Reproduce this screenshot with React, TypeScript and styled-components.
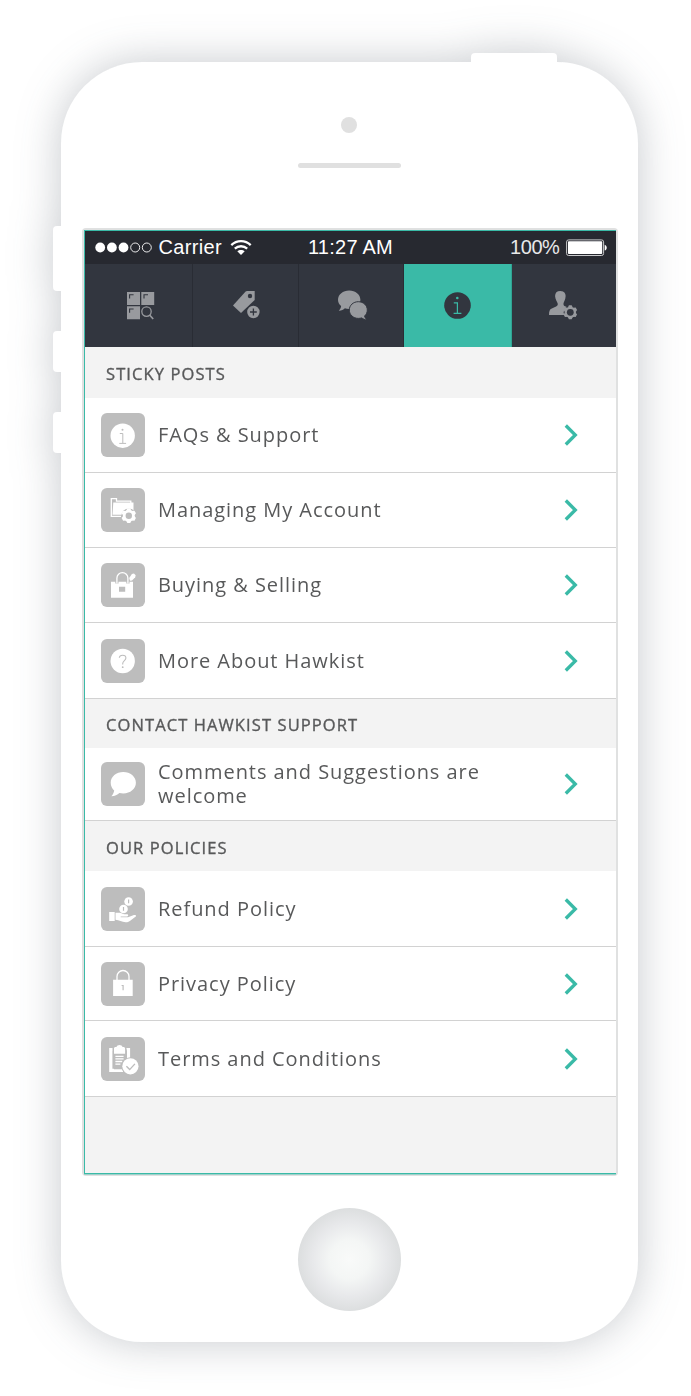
import React from "react";
import styled, { createGlobalStyle } from "styled-components";

const GlobalStyle = createGlobalStyle`
  * { box-sizing: border-box; }
  body { margin: 0; background: #fff; overflow: hidden; }
`;

const TEAL = "#3abaa7";
const TILE = "#bdbdbd";
const DARK = "#32363f";
const MUTED = "#989a9e";

const Stage = styled.main`
  height: 1396px;
  width: 691px;
  padding: 62px 0 0 61px;
  overflow: hidden;
`;

const Phone = styled.div`
  position: relative;
  width: 577px;
  height: 1280px;
  padding-top: 55px;
  display: flex;
  flex-direction: column;
  align-items: center;
  border-radius: 81px;
  background: #fff;
  filter: drop-shadow(0 0 22px rgba(50, 60, 76, 0.28));
`;

const SideButton = styled.span<{ $top: number; $height: number }>`
  position: absolute;
  left: -8px;
  top: ${(p) => p.$top}px;
  width: 9px;
  height: ${(p) => p.$height}px;
  border-radius: 4px 0 0 4px;
  background: #fff;
`;

const PowerButton = styled.span`
  position: absolute;
  left: 410px;
  top: -9px;
  width: 86px;
  height: 12px;
  border-radius: 4px 4px 0 0;
  background: #fff;
`;

const Camera = styled.div`
  width: 16px;
  height: 16px;
  margin-right: 1px;
  border-radius: 50%;
  background: #e0e0e0;
  flex: none;
`;

const Speaker = styled.div`
  width: 103px;
  height: 5px;
  margin: 30px 0 60px;
  border-radius: 3px;
  background: #e0e0e0;
  flex: none;
`;

const Bezel = styled.div`
  width: 536px;
  height: 948px;
  padding: 2px;
  border-radius: 4px;
  background: #e0e1e1;
  flex: none;
`;

const Screen = styled.section`
  display: flex;
  flex-direction: column;
  width: 532px;
  height: 944px;
  border: solid ${TEAL};
  border-width: 1px 0 1px 1px;
  box-shadow: 0 1px 0 rgba(58, 186, 167, 0.4);
  background: #f3f3f3;
  font-family: "Open Sans", sans-serif;
  color: #58595a;
`;

const StatusBar = styled.header`
  display: grid;
  grid-template-columns: 1fr auto 1fr;
  align-items: center;
  height: 33px;
  padding: 0 9px 0 10px;
  background: #272930;
  color: #fff;
  font: 20px/33px "Liberation Sans", Arial, sans-serif;
`;

const StatusGroup = styled.div<{ $end?: boolean }>`
  display: flex;
  align-items: center;
  justify-content: ${(p) => (p.$end ? "flex-end" : "flex-start")};
  gap: 6px;
`;

const Carrier = styled.span`
  margin: 0 2px 0 1px;
  letter-spacing: 0.35px;
`;

const Clock = styled.span`
  letter-spacing: 0.25px;
`;

const Percent = styled.span`
  color: #e8e8ea;
  letter-spacing: -0.4px;
`;

const TabBar = styled.nav`
  display: grid;
  grid-template-columns: 108px 106px 105px 108px 104px;
  height: 83px;
  background: ${DARK};
`;

const Tab = styled.button<{ $active?: boolean; $inset: number }>`
  display: flex;
  align-items: center;
  border: 0;
  border-right: 1px solid ${(p) => (p.$active ? "#2fa594" : "#292c34")};
  padding: 0 0 1px ${(p) => p.$inset}px;
  background: ${(p) => (p.$active ? TEAL : "transparent")};
  &:last-child { border-right: 0; }
  svg { overflow: visible; }
`;

const SectionTitle = styled.h2<{ $height: number }>`
  margin: 0;
  height: ${(p) => p.$height}px;
  padding: 2px 0 0 21.5px;
  font-size: 16.5px;
  font-weight: 400;
  line-height: ${(p) => Math.min(p.$height, 50) - 1}px;
  letter-spacing: 1.1px;
  color: #58595a;
  -webkit-text-stroke: 0.35px #58595a;
`;

const List = styled.ul`
  margin: 0;
  padding: 0;
  list-style: none;
`;

const Row = styled.li<{ $height: number }>`
  display: flex;
  align-items: center;
  height: ${(p) => p.$height}px;
  padding: 0 38px 0 16px;
  border-bottom: 1px solid #d2d2d2;
  background: #fff;
`;

const Tile = styled.svg`
  flex: none;
  width: 44px;
  height: 44px;
  border-radius: 6px;
  background: ${TILE};
`;

const Label = styled.span`
  flex: 1;
  padding: 0 60px 0 13.5px;
  font-size: 20px;
  font-weight: 400;
  line-height: 24px;
  letter-spacing: 0.95px;
`;

const Chevron = () => (
  <svg width="14" height="22" viewBox="0 0 14 22" fill="none" stroke={TEAL} strokeWidth="3.3">
    <path d="M1.8 1.500 11.300 11 1.800 20.500" />
  </svg>
);

const HomeButton = styled.div`
  width: 103px;
  height: 103px;
  margin-top: 32px;
  border-radius: 50%;
  background: radial-gradient(circle closest-side, #f9faf9 0, #f4f6f5 38%, #e8e9eb 70%, #dcdedf 100%);
  flex: none;
`;

type GearProps = { cx: number; cy: number; r: number; hole: number; fill: string; bg: string };
const Gear = ({ cx, cy, r, hole, fill, bg }: GearProps) => (
  <g transform={`translate(${cx} ${cy})`}>
    <circle r={r * 0.8} fill={fill} />
    {[0, 60, 120, 180, 240, 300].map((a) => (
      <path key={a} transform={`rotate(${a})`} d={`M${-r * 0.36} ${-r * 0.65}L${-r * 0.2} ${-r}H${r * 0.2}L${r * 0.36} ${-r * 0.65}Z`} fill={fill} />
    ))}
    <circle r={hole} fill={bg} />
  </g>
);

const tabIcons = {
  browse: (
    <svg width="28" height="28" viewBox="0 0 28 28" fill={MUTED}>
      <path d="M0 1h13v13H0zM14.3 1h12.9v13H14.3zM0 15.2h13v13H0z" />
      <path d="M2.6 7.6V3.8h4M17 7.6V3.8h4M2.6 21.8V18h4" fill="none" stroke={DARK} strokeWidth="1.100" />
      <circle cx="19.5" cy="20.6" r="4.7" fill="none" stroke={MUTED} strokeWidth="1.300" />
      <path d="m22.600 24 3.600 4" stroke={MUTED} strokeWidth="1.700" />
    </svg>
  ),
  sell: (
    <svg width="28" height="28" viewBox="0 0 28 28" fill={MUTED}>
      <path d="M0 14.6 12.6.5 14 0h7.700v8.900L8 22z" />
      <circle cx="17" cy="5" r="2.200" fill={DARK} />
      <circle cx="20.400" cy="21" r="7.200" fill={DARK} />
      <circle cx="20.400" cy="21" r="6.200" />
      <path d="M20.400 17.600v6.800M17 21h6.800" stroke={DARK} strokeWidth="1.300" />
    </svg>
  ),
  chat: (
    <svg width="28" height="28" viewBox="0 1 28 28" fill={MUTED}>
      <path d="M11.200.5C17.400.5 22.400 4.500 22.400 9.800s-5 9.200-11.200 9.200c-1.600 0-3-.2-4.300-.7C5.400 19.600 3.400 20.800.8 20.700c1.500-1.600 2.200-3 2.300-4.600C1.100 14.400 0 12.300 0 9.800 0 4.500 5 .5 11.200.5Z" />
      <path d="M20.300 11.700c5 0 9 3.600 9 8.300 0 2.400-1 4.500-2.700 6 .2 1.300 1 2.500 2.300 3.800-2.200 0-3.800-.8-5.100-1.900-1.100.3-2.200.5-3.500.5-5 0-9-3.700-9-8.400s4-8.300 9-8.300Z" stroke={DARK} strokeWidth="1" />
    </svg>
  ),
  info: (
    <svg width="28" height="28" viewBox="0 0 28 28">
      <circle cx="13.500" cy="14.500" r="13.300" fill={DARK} />
      <circle cx="13.300" cy="7" r="1.300" fill={TEAL} />
      <path d="M9.800 11.900h3.600v10.300M9.600 22.300h7.800" fill="none" stroke={TEAL} strokeWidth="1.200" />
    </svg>
  ),
  profile: (
    <svg width="28" height="28" viewBox="0 0 28 28" fill={MUTED}>
      <path d="M11.300 0c3.600 0 5.500 2.100 5.300 5.300-.1 3.300-1.500 5.300-2 6.700-.4 1.500.2 2.600 1.500 3.200l4 1.800V24H0c0-3.800.6-5.600 2.800-6.500l4.300-1.900c1.500-.7 1.900-1.800 1.500-3.300C8.200 10.900 6.300 8.700 6.100 5.300 6 2.100 7.700 0 11.300 0Z" />
      <circle cx="21.300" cy="21.300" r="6.600" fill={DARK} />
      <Gear cx={21.3} cy={21.3} r={7} hole={3.4} fill={MUTED} bg={DARK} />
    </svg>
  ),
};

const tileIcons = {
  info: (
    <>
      <circle cx="21.700" cy="22.700" r="12.200" fill="#fff" />
      <circle cx="21.500" cy="16.800" r="1" fill={TILE} />
      <path d="M18.800 20.500h3v9.700M18.300 30.400h6.800" fill="none" stroke={TILE} strokeWidth="1" />
    </>
  ),
  folder: (
    <>
      <path d="M20 28.300H10.300V10.700h5.200v2.400h14.300v2" fill="none" stroke="#fff" strokeWidth="1.300" />
      <path d="M12.300 14.500h20.200V25L20 26.800h-8.500Z" fill="#fff" />
      <circle cx="27.800" cy="27.700" r="7.300" fill={TILE} />
      <Gear cx={27.8} cy={27.7} r={7.4} hole={3.2} fill="#fff" bg={TILE} />
    </>
  ),
  bag: (
    <>
      <path d="M10 18.700h22v16H10z" fill="#fff" />
      <path d="M15.900 20.500v-5.300a5.500 5.500 0 0 1 11 0v5.300" fill="none" stroke={TILE} strokeWidth="3.200" />
      <path d="M15.900 20.500v-5.300a5.500 5.500 0 0 1 11 0v5.300" fill="none" stroke="#fff" strokeWidth="1.300" />
      <path d="m28.200 15 2.700-3.900 2-.5 1.800 1.600-.5 2-3.200 3.200-2 .3Z" fill="#fff" />
      <path d="M18 23.700h6.200v5H18z" fill={TILE} />
    </>
  ),
  question: (
    <>
      <circle cx="21.700" cy="22" r="12.200" fill="#fff" />
      <path d="M18.300 18.800c.2-1.700 1.500-2.600 3.300-2.600 1.900 0 3.300 1.100 3.300 2.800 0 2.600-3.200 2.700-3.200 5.700v.8" fill="none" stroke={TILE} strokeWidth="1.100" />
      <circle cx="21.700" cy="28.200" r=".9" fill={TILE} />
    </>
  ),
  comment: (
    <path d="M22.300 10c7 0 12.600 4.700 12.600 10.700s-5.600 10.700-12.600 10.700c-1.400 0-2.700-.2-3.900-.5-2 1.900-4.500 3.100-8 3.300 1.500-1.700 2.500-3.500 2.800-5.700-2.200-2-3.500-4.700-3.500-7.800C9.700 14.700 15.300 10 22.300 10Z" fill="#fff" />
  ),
  refund: (
    <>
      <circle cx="27.600" cy="14.500" r="4.300" fill="#fff" />
      <circle cx="22.500" cy="22" r="4.300" fill="#fff" />
      <path d="M27.600 12.500v3.800M22.500 20v3.800" stroke={TILE} strokeWidth="1.200" />
      <path d="M8.200 25h5.500v9H8.200z" fill="#fff" />
      <path d="M14.500 25.800h4.200c2 0 2.800 1.400 4.700 1.400h2.700c1.500 0 1.500 2.200 0 2.200h-6.400v.8h7.300l5.300-2c1.500-.6 2.900.1 2.800 1l-6.200 4.800c-1.500 1-2.700 1.400-4.300 1.300-3.800-.2-6.300-2.100-10.100-2.500Z" fill="#fff" />
    </>
  ),
  lock: (
    <>
      <path d="M12.100 17.700h19.600V34H12.100z" fill="#fff" />
      <path d="M16 18v-3.500a6 6 0 0 1 12 0V18" fill="none" stroke="#fff" strokeWidth="1.300" />
      <path d="M20.600 23.500h1.500v4.800" fill="none" stroke={TILE} strokeWidth="1.200" />
    </>
  ),
  terms: (
    <>
      <path d="M11.500 12.500H9.800v20.800H22M25.500 12.500h2V22" fill="none" stroke="#fff" strokeWidth="3.200" />
      <path d="M12.900 12.500h12.900v19.800H12.900z" fill={TILE} />
      <path d="M13 16.700V11.500c0-1.300 1-1.600 2.500-1.600.5-1.200 1.600-1.900 3-1.900s2.600.7 3 1.900c1.500 0 2.600.3 2.600 1.600v5.200Z" fill="#fff" />
      <path d="M14.400 19.300h8.200M14.400 21.900h8.200M14.400 24.500h6.800M14.400 27.100h5" stroke="#fff" strokeWidth="1.300" />
      <circle cx="29.400" cy="29.300" r="9" fill={TILE} />
      <circle cx="29.400" cy="29.300" r="8.100" fill="#fff" />
      <path d="m25.400 29.300 3.300 3.300 5.200-5.700" fill="none" stroke={TILE} strokeWidth="1.400" />
    </>
  ),
};

type RowData = { icon: keyof typeof tileIcons; label: string; height: number };
const sections: { title: string; height: number; rows: RowData[] }[] = [
  {
    title: "STICKY POSTS",
    height: 51,
    rows: [
      { icon: "info", label: "FAQs & Support", height: 75 },
      { icon: "folder", label: "Managing My Account", height: 75 },
      { icon: "bag", label: "Buying & Selling", height: 75 },
      { icon: "question", label: "More About Hawkist", height: 76 },
    ],
  },
  {
    title: "CONTACT HAWKIST SUPPORT",
    height: 49,
    rows: [{ icon: "comment", label: "Comments and Suggestions are welcome", height: 73 }],
  },
  {
    title: "OUR POLICIES",
    height: 50,
    rows: [
      { icon: "refund", label: "Refund Policy", height: 76 },
      { icon: "lock", label: "Privacy Policy", height: 74 },
      { icon: "terms", label: "Terms and Conditions", height: 76 },
    ],
  },
];

const tabs: { icon: keyof typeof tabIcons; inset: number; active?: boolean }[] = [
  { icon: "browse", inset: 42 },
  { icon: "sell", inset: 40 },
  { icon: "chat", inset: 39 },
  { icon: "info", inset: 40, active: true },
  { icon: "profile", inset: 37.5 },
];

const Signal = () => (
  <svg width="57" height="12" viewBox="0 0 57 12" fill="#fff">
    <circle cx="5.200" cy="5.500" r="4.900" />
    <circle cx="16.900" cy="5.500" r="4.900" />
    <circle cx="28.500" cy="5.500" r="4.900" />
    <circle cx="40.200" cy="5.500" r="4.500" fill="none" stroke="#fff" strokeWidth=".9" />
    <circle cx="51.800" cy="5.500" r="4.500" fill="none" stroke="#fff" strokeWidth=".9" />
  </svg>
);

const Wifi = () => (
  <svg width="22" height="18" viewBox="0 0 22 18" fill="none" stroke="#fff" strokeWidth="2.300">
    <path d="M1.300 6.100c5.400-5.200 14-5.200 19.400 0M4.800 9.700c3.600-3.300 8.800-3.300 12.400 0" />
    <path d="m11 16-3.700-3.800c2-1.700 5.400-1.700 7.400 0Z" fill="#fff" stroke="none" />
  </svg>
);

const Battery = () => (
  <svg width="41" height="18" viewBox="0 0 41 18">
    <rect x=".6" y=".9" width="37" height="15.600" rx="2" fill="none" stroke="#c9cacc" strokeWidth="1" />
    <rect x="2" y="2.300" width="34.200" height="12.800" rx=".8" fill="#fff" />
    <path d="M38.700 5.800c2.700.8 2.700 5 0 5.800Z" fill="#fff" />
  </svg>
);

export default function App() {
  return (
    <>
      <GlobalStyle />
      <Stage>
        <Phone>
          <PowerButton />
          <SideButton $top={164} $height={65} />
          <SideButton $top={269} $height={41} />
          <SideButton $top={350} $height={41} />
          <Camera />
          <Speaker />
          <Bezel>
            <Screen>
              <StatusBar>
                <StatusGroup>
                  <Signal />
                  <Carrier>Carrier</Carrier>
                  <Wifi />
                </StatusGroup>
                <Clock>11:27 AM</Clock>
                <StatusGroup $end>
                  <Percent>100%</Percent>
                  <Battery />
                </StatusGroup>
              </StatusBar>
              <TabBar>
                {tabs.map((t) => (
                  <Tab key={t.icon} $active={t.active} $inset={t.inset}>
                    {tabIcons[t.icon]}
                  </Tab>
                ))}
              </TabBar>
              {sections.map((s) => (
                <React.Fragment key={s.title}>
                  <SectionTitle $height={s.height}>{s.title}</SectionTitle>
                  <List>
                    {s.rows.map((r) => (
                      <Row key={r.label} $height={r.height}>
                        <Tile viewBox="0 0 44 44">{tileIcons[r.icon]}</Tile>
                        <Label>{r.label}</Label>
                        <Chevron />
                      </Row>
                    ))}
                  </List>
                </React.Fragment>
              ))}
            </Screen>
          </Bezel>
          <HomeButton />
        </Phone>
      </Stage>
    </>
  );
}
